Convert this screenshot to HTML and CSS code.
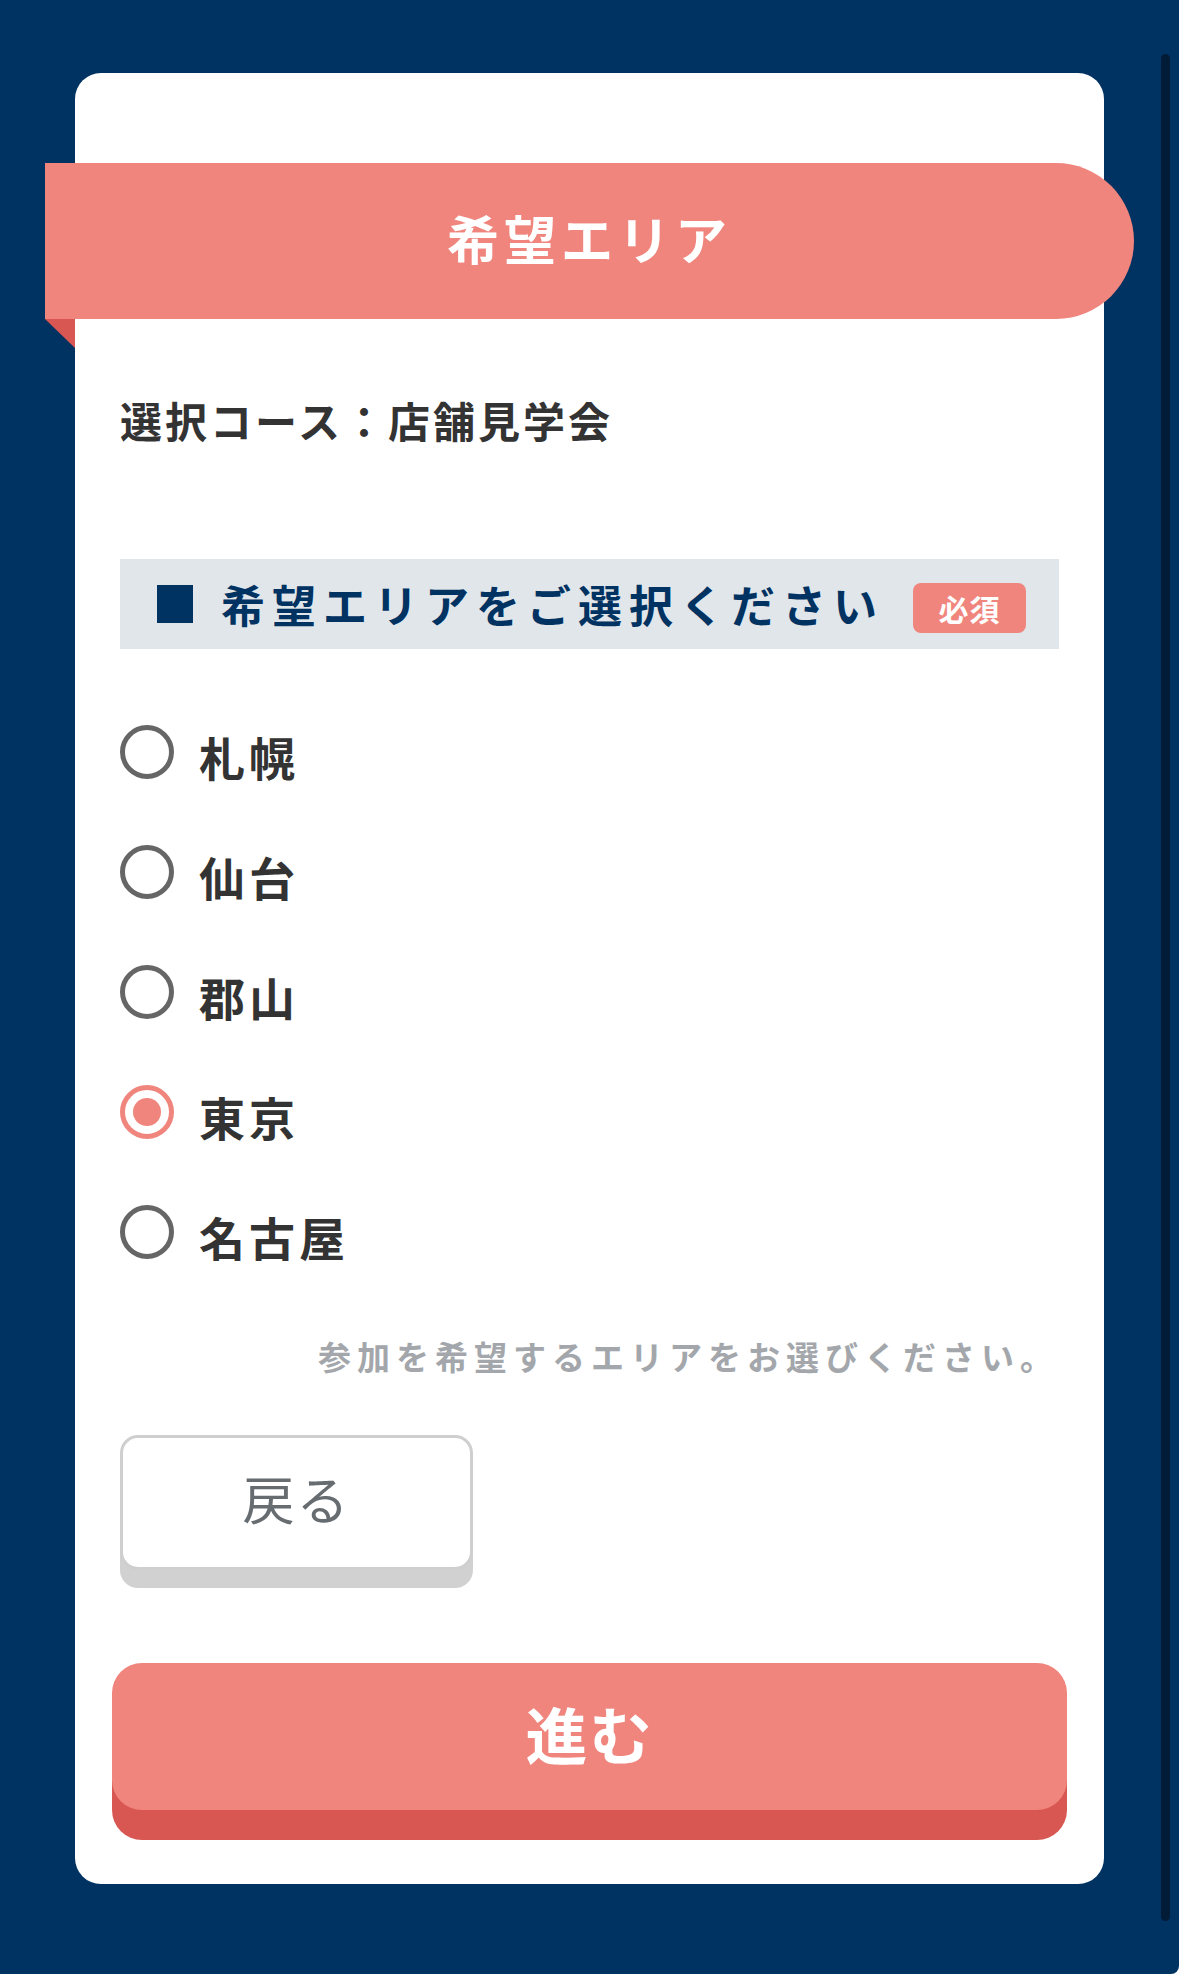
FILE: index.html
```html
<!DOCTYPE html>
<html lang="ja">
<head>
<title>希望エリア</title>
	<meta charset="utf-8">
	<meta name="viewport" content="width=device-width, initial-scale=1.0">
	<link rel="stylesheet" href="styles.css">
</head>

<body>
<div class="page">
	<div class="card">
		<h1 class="ribbon">希望エリア</h1>

		<p class="course">選択コース：店舗見学会</p>

		<div class="section_head">
			<span class="square"></span>
			<span class="section_title">希望エリアをご選択ください</span>
			<span class="badge">必須</span>
		</div>

		<ul class="area_list">
			<li><label><input type="radio" name="area" value="sapporo"><span class="area_name">札幌</span></label></li>
			<li><label><input type="radio" name="area" value="sendai"><span class="area_name">仙台</span></label></li>
			<li><label><input type="radio" name="area" value="koriyama"><span class="area_name">郡山</span></label></li>
			<li><label><input type="radio" name="area" value="tokyo" checked><span class="area_name">東京</span></label></li>
			<li><label><input type="radio" name="area" value="nagoya"><span class="area_name">名古屋</span></label></li>
		</ul>

		<p class="note">参加を希望するエリアをお選びください。</p>

		<a href="" class="btn_back">戻る</a>
		<a href="" class="btn_next">進む</a>
	</div>
	<div class="scrollbar"></div>
</div>
</body>
</html>
```

FILE: styles.css
```css
html, body, h1, p, ul {
	margin: 0;
	padding: 0;
}
html, body {
	background-color: #fff;
}
ul {
	list-style: none;
}
a {
	text-decoration: none;
}
body {
	font-family: "Noto Sans CJK JP", "Noto Sans", sans-serif;
	color: #333;
}
.page {
	position: relative;
	box-sizing: border-box;
	height: 1974px;
	padding: 73px 0 0 75px;
	background-color: #003262;
	border-bottom-right-radius: 8px;
}
.card {
	width: 1029px;
	box-sizing: border-box;
	padding: 90px 45px 44px;
	background-color: #fff;
	border-radius: 26px;
}
.ribbon {
	position: relative;
	display: flex;
	align-items: center;
	justify-content: center;
	margin: 0 -75px 0 -75px;
	box-sizing: border-box;
	height: 156px;
	padding-bottom: 7px;
	font-size: 52px;
	font-weight: 700;
	line-height: 1;
	letter-spacing: 5px;
	color: #fff;
	background-color: #f0857d;
	border-radius: 0 78px 78px 0;
}
.ribbon::after {
	content: "";
	position: absolute;
	left: 0;
	top: 100%;
	width: 0;
	height: 0;
	border-top: 29px solid #d95753;
	border-left: 30px solid transparent;
}
.course {
	margin-top: 80px;
	font-size: 42px;
	font-weight: 700;
	line-height: 1;
	letter-spacing: 3px;
	color: #333;
}
.section_head {
	display: flex;
	align-items: center;
	margin-top: 118px;
	height: 90px;
	padding-left: 37px;
	background-color: #e1e6ea;
}
.square {
	width: 36px;
	height: 38px;
	background-color: #003262;
}
.section_title {
	margin-left: 28px;
	font-size: 44px;
	font-weight: 700;
	line-height: 1;
	letter-spacing: 7px;
	color: #003262;
}
.badge {
	display: flex;
	align-items: center;
	justify-content: center;
	margin: 8px 0 0 29px;
	width: 113px;
	height: 50px;
	font-size: 30px;
	font-weight: 700;
	line-height: 1;
	letter-spacing: 1px;
	color: #fff;
	background-color: #f0857d;
	border-radius: 8px;
}
.area_list {
	display: flex;
	flex-direction: column;
	gap: 66px;
	margin-top: 76px;
}
.area_list label {
	display: flex;
	align-items: center;
	height: 54px;
}
.area_list input {
	appearance: none;
	-webkit-appearance: none;
	position: relative;
	margin: 0;
	width: 54px;
	height: 54px;
	box-sizing: border-box;
	border: 5px solid #666;
	border-radius: 50%;
	background-color: #fff;
}
.area_list input:checked {
	border-color: #f0857d;
}
.area_list input:checked::after {
	content: "";
	position: absolute;
	left: 8px;
	top: 8px;
	width: 28px;
	height: 28px;
	border-radius: 50%;
	background-color: #f0857d;
}
.area_name {
	margin-left: 25px;
	padding-top: 8px;
	font-size: 46px;
	font-weight: 700;
	line-height: 1;
	letter-spacing: 4px;
	color: #333;
}
.note {
	margin-top: 81px;
	font-size: 33px;
	font-weight: 700;
	line-height: 1;
	letter-spacing: 6px;
	text-align: right;
	color: #a3a7ab;
}
.btn_back {
	display: flex;
	align-items: center;
	justify-content: center;
	margin-top: 62px;
	width: 353px;
	height: 135px;
	box-sizing: border-box;
	padding-bottom: 9px;
	font-size: 52px;
	line-height: 1;
	letter-spacing: 2px;
	color: #666c70;
	background-color: #fff;
	border: 3px solid #cfcfcf;
	border-radius: 18px;
	box-shadow: 0 18px 0 #d1d1d1;
}
.btn_next {
	display: flex;
	align-items: center;
	justify-content: center;
	margin: 93px -8px 30px;
	box-sizing: border-box;
	height: 147px;
	padding-bottom: 7px;
	font-size: 62px;
	font-weight: 700;
	line-height: 1;
	letter-spacing: 2px;
	color: #fff;
	background-color: #f0857d;
	border-radius: 30px;
	box-shadow: 0 30px 0 #d95753;
}
.scrollbar {
	position: absolute;
	left: 1161px;
	top: 54px;
	width: 9px;
	height: 1867px;
	border-radius: 5px;
	background-color: #021c38;
}
```
